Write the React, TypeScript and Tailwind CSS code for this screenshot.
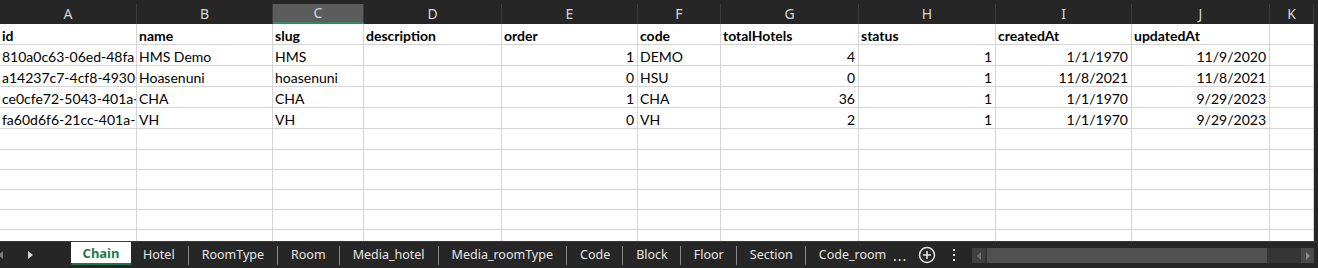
import React from "react";

const letters = ["A", "B", "C", "D", "E", "F", "G", "H", "I", "J", "K"];
const gridCols =
  "grid grid-cols-[137px_136px_91px_138px_136px_83px_138px_137px_136px_138px_44px]";

type Cell = { v: string; r?: boolean; b?: boolean };

const headerRow: Cell[] = [
  { v: "id", b: true },
  { v: "name", b: true },
  { v: "slug", b: true },
  { v: "description", b: true },
  { v: "order", b: true },
  { v: "code", b: true },
  { v: "totalHotels", b: true },
  { v: "status", b: true },
  { v: "createdAt", b: true },
  { v: "updatedAt", b: true },
  { v: "" },
];

const dataRows: Cell[][] = [
  [
    { v: "810a0c63-06ed-48fa" },
    { v: "HMS Demo" },
    { v: "HMS" },
    { v: "" },
    { v: "1", r: true },
    { v: "DEMO" },
    { v: "4", r: true },
    { v: "1", r: true },
    { v: "1/1/1970", r: true },
    { v: "11/9/2020", r: true },
    { v: "" },
  ],
  [
    { v: "a14237c7-4cf8-4930-" },
    { v: "Hoasenuni" },
    { v: "hoasenuni" },
    { v: "" },
    { v: "0", r: true },
    { v: "HSU" },
    { v: "0", r: true },
    { v: "1", r: true },
    { v: "11/8/2021", r: true },
    { v: "11/8/2021", r: true },
    { v: "" },
  ],
  [
    { v: "ce0cfe72-5043-401a-" },
    { v: "CHA" },
    { v: "CHA" },
    { v: "" },
    { v: "1", r: true },
    { v: "CHA" },
    { v: "36", r: true },
    { v: "1", r: true },
    { v: "1/1/1970", r: true },
    { v: "9/29/2023", r: true },
    { v: "" },
  ],
  [
    { v: "fa60d6f6-21cc-401a-" },
    { v: "VH" },
    { v: "VH" },
    { v: "" },
    { v: "0", r: true },
    { v: "VH" },
    { v: "2", r: true },
    { v: "1", r: true },
    { v: "1/1/1970", r: true },
    { v: "9/29/2023", r: true },
    { v: "" },
  ],
];

const emptyRow: Cell[] = letters.map(() => ({ v: "" }));

function Row({ cells, h }: { cells: Cell[]; h: string }) {
  return (
    <div className={`${gridCols} ${h} border-b border-[#d4d4d4]`}>
      {cells.map((c, i) => (
        <div
          key={i}
          className={`border-r border-[#d4d4d4] overflow-hidden whitespace-nowrap flex items-end pb-[1px] ${
            c.r ? "justify-end pr-[3px]" : "justify-start pl-[2px]"
          } ${c.b ? "font-bold" : ""}`}
        >
          <span className="leading-[14px]">{c.v}</span>
        </div>
      ))}
    </div>
  );
}

const tabs = [
  "Hotel",
  "RoomType",
  "Room",
  "Media_hotel",
  "Media_roomType",
  "Code",
  "Block",
  "Floor",
  "Section",
  "Code_room",
];

export default function App() {
  return (
    <div className="w-[1318px] h-[268px] bg-[#262626] flex flex-col overflow-hidden">
      {/* Column letters */}
      <div className="h-6 pt-1 flex shrink-0">
        <div className={`${gridCols} h-5`}>
          {letters.map((l) => (
            <div
              key={l}
              className={`flex items-center justify-center border-r border-[#3d3d3d] text-[14px] text-[#d6d6d6] font-['Noto_Sans',sans-serif] ${
                l === "C" ? "bg-[#5c5c5c] border-b-2 border-b-[#2e8b57]" : ""
              }`}
            >
              <span className="leading-none">{l}</span>
            </div>
          ))}
        </div>
      </div>

      {/* Sheet grid */}
      <div className="flex h-[217px] shrink-0">
        <div className="w-[1314px] bg-white overflow-hidden text-[14px] text-black font-['Lato',sans-serif]">
          <Row cells={headerRow} h="h-[21px]" />
          {dataRows.map((r, i) => (
            <Row key={i} cells={r} h="h-[21px]" />
          ))}
          <Row cells={emptyRow} h="h-[21px]" />
          <Row cells={emptyRow} h="h-[20px]" />
          <Row cells={emptyRow} h="h-[20px]" />
          <Row cells={emptyRow} h="h-[20px]" />
          <Row cells={emptyRow} h="h-[20px]" />
          <Row cells={emptyRow} h="h-[20px]" />
          <Row cells={emptyRow} h="h-[20px]" />
        </div>
        <div className="w-1 bg-[#262626]" />
      </div>

      {/* Tab bar */}
      <div className="h-[27px] flex items-start font-['Noto_Sans',sans-serif] text-[12.5px] text-[#e6e6e6] border-t border-[#3a3a3a]">
        <div className="w-[71px] h-[26px] flex items-center relative">
          <svg className="absolute left-[-2px] top-[9px]" width="6" height="8" viewBox="0 0 6 8">
            <path d="M5 0 L0 4 L5 8 Z" fill="#7a7a7a" />
          </svg>
          <svg className="absolute left-[28px] top-[9px]" width="5" height="8" viewBox="0 0 5 8">
            <path d="M0 0 L5 4 L0 8 Z" fill="#d8d8d8" />
          </svg>
        </div>
        <div className="w-[60px] h-[23px] pt-[2px] bg-white border-b-2 border-[#217346] flex items-center justify-center text-[13px] text-[#1e7a4a] font-bold">
          Chain
        </div>
        <div className="w-[757px] h-[26px] flex items-center overflow-hidden whitespace-nowrap">
          {tabs.map((t, i) => (
            <React.Fragment key={t}>
              <div
                className={`h-full flex items-center ${i === 0 ? "pl-[12px]" : "pl-[13px]"} ${
                  i >= 5 ? "pr-[12px]" : "pr-[13px]"
                }`}
              >
                {t}
              </div>
              {i < tabs.length - 1 && <div className="w-px h-[19px] bg-[#8a8a8a] shrink-0" />}
            </React.Fragment>
          ))}
        </div>
        <div className="h-[26px] flex items-center pl-[5px] w-[30px] text-[14px] tracking-[1px]">...</div>
        <div className="h-[26px] flex items-center">
          <svg width="18" height="18" viewBox="0 0 18 18">
            <circle cx="9" cy="9" r="7.5" fill="none" stroke="#e6e6e6" strokeWidth="1.5" />
            <path d="M9 5 V13 M5 9 H13" stroke="#e6e6e6" strokeWidth="1.6" />
          </svg>
        </div>
        <div className="h-[26px] w-[36px] flex items-center justify-center">
          <svg width="4" height="14" viewBox="0 0 4 14">
            <rect x="1" y="1" width="2" height="2" fill="#e0e0e0" />
            <rect x="1" y="6" width="2" height="2" fill="#e0e0e0" />
            <rect x="1" y="11" width="2" height="2" fill="#e0e0e0" />
          </svg>
        </div>
        <div className="mt-[6px] w-[342px] h-[15px] bg-[#353535] flex items-stretch">
          <div className="w-[13px] bg-[#404040] flex items-center justify-center">
            <svg width="4" height="8" viewBox="0 0 4 8">
              <path d="M4 0 L0 4 L4 8 Z" fill="#6e6e6e" />
            </svg>
          </div>
          <div className="ml-[2px] w-[280px] bg-[#505050]" />
          <div className="flex-1" />
          <div className="w-[13px] bg-[#4a4a4a] flex items-center justify-center">
            <svg width="4" height="8" viewBox="0 0 4 8">
              <path d="M0 0 L4 4 L0 8 Z" fill="#8c8c8c" />
            </svg>
          </div>
        </div>
      </div>
    </div>
  );
}
